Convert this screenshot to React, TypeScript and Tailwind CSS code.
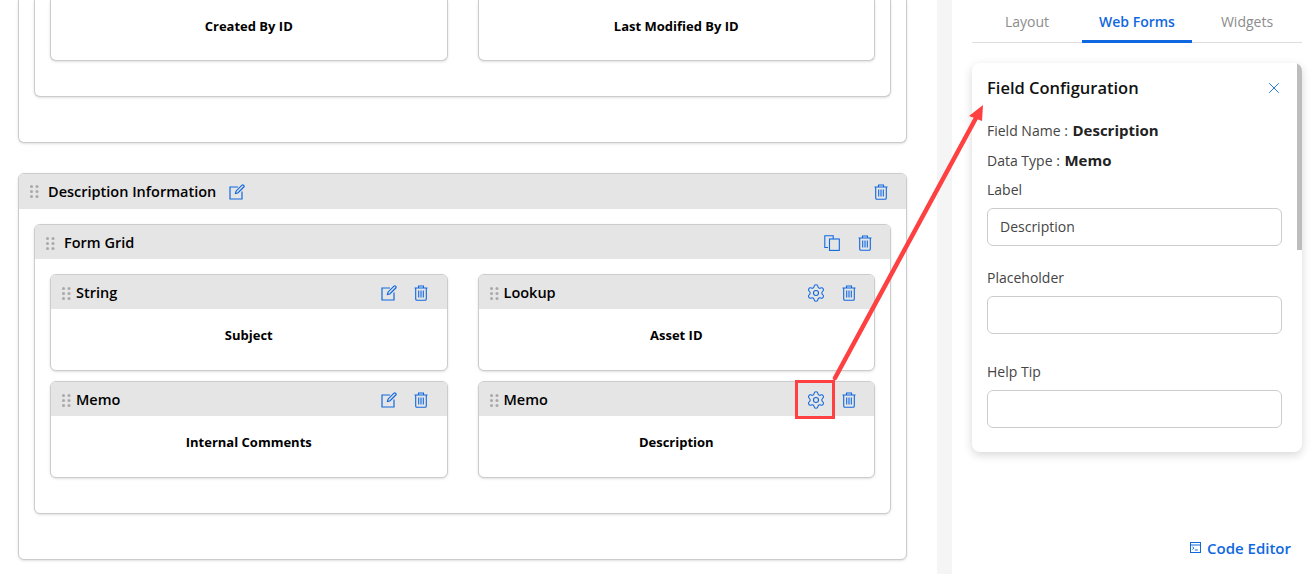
import { Settings, X } from "lucide-react";

const blue = "#1068e0";

function Grip() {
  return (
    <svg width="9" height="13" viewBox="0 0 9 13" className="shrink-0">
      {[1.5, 6.5, 11.5].map((y) => (
        <g key={y} fill="#a9a9a9">
          <circle cx="1.5" cy={y} r="1.5" />
          <circle cx="7" cy={y} r="1.5" />
        </g>
      ))}
    </svg>
  );
}

function EditIcon() {
  return (
    <svg width="16" height="16" viewBox="0 0 16 16" fill="none" stroke={blue} strokeWidth="1.2" className="shrink-0">
      <path d="M9 3H1v12h12V7.5" />
      <path d="M6.5 9.5 7 7.2 13 1.2a1 1 0 0 1 1.5 0l.3.3a1 1 0 0 1 0 1.5l-6 6z" />
    </svg>
  );
}

function TrashIcon() {
  return (
    <svg width="14" height="16" viewBox="0 0 14 16" fill="none" stroke={blue} strokeWidth="1.1" className="shrink-0">
      <path d="M.5 3h13" />
      <path d="M4.5 3V1h5v2" />
      <path d="M1.7 3v11a1.3 1.3 0 0 0 1.3 1.3h8a1.3 1.3 0 0 0 1.3-1.3V3" />
      <path d="M4.7 5.5v7M7 5.5v7M9.3 5.5v7" />
    </svg>
  );
}

function CopyIcon() {
  return (
    <svg width="16" height="16" viewBox="0 0 16 16" fill="none" stroke={blue} strokeWidth="1.1" className="shrink-0">
      <path d="M4 12.5H.8V.8h8.4V4" />
      <rect x="5.5" y="4" width="9.8" height="11.4" />
    </svg>
  );
}

function GearIcon() {
  return <Settings size={20} color={blue} strokeWidth={1.3} className="shrink-0" />;
}

function FieldCard(props: { type: string; name: string; gear?: boolean }) {
  return (
    <div className="h-[97px] rounded-md border border-[#cccccc] bg-white shadow-sm overflow-hidden">
      <div className="h-[34px] bg-[#e5e5e5] flex items-center pl-[11px] pt-[2px]">
        <Grip />
        <span className="ml-[5px] text-[14.5px] font-semibold text-black">{props.type}</span>
        {props.gear ? (
          <div className="ml-auto flex items-center gap-[16px] pr-[18px]">
            <GearIcon />
            <TrashIcon />
          </div>
        ) : (
          <div className="ml-auto flex items-center gap-[17px] pr-[19px]">
            <EditIcon />
            <TrashIcon />
          </div>
        )}
      </div>
      <div className="h-[61px] pt-[17px] text-center text-[13px] font-bold text-black">{props.name}</div>
    </div>
  );
}

// the page is scrolled, only the bottom of this section is on screen
function ScrolledSection() {
  return (
    <div className="h-[143px] rounded-b-md border border-t-0 border-[#cccccc] bg-white px-[15px] shadow-sm">
      <div className="grid h-[97px] grid-cols-2 items-start gap-x-[30px] rounded-b-md border border-t-0 border-[#cccccc] bg-white px-[15px] shadow-sm">
        {["Created By ID", "Last Modified By ID"].map((name) => (
          <div
            key={name}
            className="h-[61px] rounded-b-md border border-t-0 border-[#cccccc] bg-white pt-[17px] text-center text-[13px] font-bold text-black shadow-sm"
          >
            {name}
          </div>
        ))}
      </div>
    </div>
  );
}

function Section(props: { title: string; className?: string; children: React.ReactNode }) {
  return (
    <div className={`h-[387px] rounded-md border border-[#cccccc] bg-white shadow-sm overflow-hidden ${props.className ?? ""}`}>
      <div className="h-[35px] bg-[#e5e5e5] flex items-center pl-[11px] pr-[18px]">
        <Grip />
        <span className="ml-[9px] text-[14.5px] font-semibold text-black">{props.title}</span>
        <span className="ml-[13px]">
          <EditIcon />
        </span>
        <span className="ml-auto">
          <TrashIcon />
        </span>
      </div>
      <div className="px-[15px] pt-[15px]">
        <div className="h-[290px] rounded-md border border-[#cccccc] bg-white shadow-sm overflow-hidden">
          <div className="h-[34px] bg-[#e5e5e5] flex items-center pl-[11px] pr-[18px] pt-[2px]">
            <Grip />
            <span className="ml-[9px] text-[14.5px] font-semibold text-black">Form Grid</span>
            <div className="ml-auto flex items-center gap-[18px]">
              <CopyIcon />
              <TrashIcon />
            </div>
          </div>
          <div className="grid grid-cols-2 gap-x-[30px] gap-y-[10px] px-[15px] pt-[15px]">{props.children}</div>
        </div>
      </div>
    </div>
  );
}

function TextField(props: { label: string; value?: string; className?: string }) {
  return (
    <div className={props.className}>
      <div className="text-sm text-[#444444] leading-[20px]">{props.label}</div>
      <div className="mt-[8px] h-[38px] w-[295px] rounded-md border border-[#cccccc] flex items-center px-3 text-sm text-[#444444]">
        {props.value}
      </div>
    </div>
  );
}

export default function App() {
  return (
    <div className="relative flex h-[574px] w-[1315px] overflow-hidden bg-white font-['Open_Sans',sans-serif]">
      <div className="w-[937px] shrink-0 pl-[18px] pr-[30px]">
        <ScrolledSection />
        <Section title="Description Information" className="mt-[30px]">
          <FieldCard type="String" name="Subject" />
          <FieldCard type="Lookup" name="Asset ID" gear />
          <FieldCard type="Memo" name="Internal Comments" />
          <FieldCard type="Memo" name="Description" gear />
        </Section>
      </div>

      <div className="w-[15px] shrink-0 bg-[#f5f5f5]" />

      <div className="flex flex-1 flex-col pl-5 pr-[13px]">
        <div className="flex h-[43px] border-b border-[#dddddd]">
          <div className="w-[110px] pt-3 text-center text-sm text-[#8c8c8c]">Layout</div>
          <div className="w-[110px] h-[43px] border-b-[3px] border-[#1068e0] pt-3 text-center text-sm font-semibold text-[#1068e0]">
            Web Forms
          </div>
          <div className="w-[110px] pt-3 text-center text-sm text-[#8c8c8c]">Widgets</div>
        </div>

        <div className="relative mt-5 h-[389px] overflow-hidden rounded-lg bg-white px-[15px] pt-[13px] shadow-[0_3px_10px_rgba(0,0,0,0.16)]">
          <div className="flex h-[24px] items-center justify-between pr-[4px]">
            <span className="text-[16.5px] font-semibold text-[#111111]">Field Configuration</span>
            <X size={18} color={blue} strokeWidth={1.2} />
          </div>
          <div className="mt-[20px] text-sm leading-[20px] text-[#444444]">
            Field Name : <span className="ml-[1px] text-[15px] font-bold text-[#222222]">Description</span>
          </div>
          <div className="mt-[9px] text-sm leading-[20px] text-[#444444]">
            Data Type : <span className="ml-[1px] text-[15px] font-bold text-[#222222]">Memo</span>
          </div>
          <TextField label="Label" value="Description" className="mt-[9px]" />
          <TextField label="Placeholder" className="mt-[22px]" />
          <TextField label="Help Tip" className="mt-[28px]" />
          <div className="absolute right-0 top-0 h-[187px] w-[5px] bg-[#bdbdbd]" />
        </div>

        <div className="mt-auto mb-[15px] flex items-center justify-end gap-[6px] pr-[11px] text-[15px] font-semibold text-[#1068e0]">
          <svg width="11" height="11" viewBox="0 0 11 11" fill="none" stroke={blue} strokeWidth="1">
            <rect x=".5" y=".5" width="10" height="10" />
            <path d="M.5 3h10" />
            <path d="M2.5 5l1.5 1.2L2.5 7.4M4.8 8h3" />
          </svg>
          Code Editor
        </div>
      </div>

      {/* callout drawn over the screenshot */}
      <div className="absolute left-[795px] top-[380px] h-[39px] w-[40px] border-[3px] border-[#ff4040]" />
      <svg className="absolute left-0 top-0 pointer-events-none" width="1315" height="574" viewBox="0 0 1315 574">
        <path d="M835 378 976 118" stroke="#ff4040" strokeWidth="4.5" strokeLinecap="round" fill="none" />
        <path d="M983 105 969 116 982 121z" fill="#ff4040" />
      </svg>
    </div>
  );
}
